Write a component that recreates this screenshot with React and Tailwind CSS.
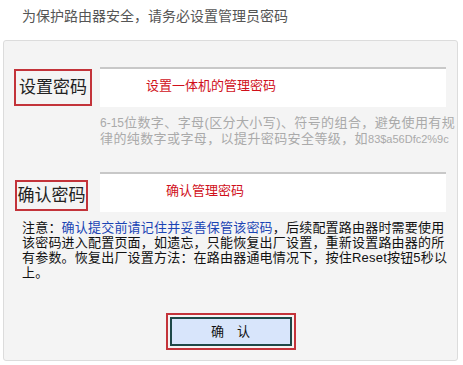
/**
 * Router admin password setup — first-run prompt.
 */
import { useState } from 'react';

const cjk = "font-['Liberation_Sans','Noto_Sans_CJK_SC',sans-serif]";

function PasswordRow({ label, hint, labelClass, alignClass }) {
  const [value, setValue] = useState('');
  return (
    <div className={`flex ${alignClass}`}>
      <div className="w-[86px] shrink-0">
        <div className={`flex items-center justify-center whitespace-nowrap border-2 border-[#c3333a] text-[17px] text-[#222] leading-none ${labelClass}`}>
          {label}
        </div>
      </div>
      <div className="relative w-[346px] h-[40px] bg-white border-t-2 border-[#c8c8c8]">
        <input
          type="password"
          value={value}
          onChange={e => setValue(e.target.value)}
          className="w-full h-full outline-none bg-transparent px-2"
        />
        {!value && (
          <span className="absolute top-[9px] text-[13px] leading-[16px] text-[#d0101b] pointer-events-none" style={{ left: hint.left }}>
            {hint.text}
          </span>
        )}
      </div>
    </div>
  );
}

export default function App() {
  return (
    <div className={`w-[463px] h-[365px] bg-white ${cjk}`}>
      <p className="pl-[22px] pt-[6px] h-[40px] text-[14px] text-[#555]">为保护路由器安全，请务必设置管理员密码</p>

      <div className="mx-[3px] w-[455px] h-[321px] bg-[#f4f4f4] border border-[#dcdcdc] rounded-[3px] pt-[26px] pl-[10px]">
        <PasswordRow
          label="设置密码"
          labelClass="w-[78px] h-[37px]"
          alignClass="items-center"
          hint={{ text: '设置一体机的管理密码', left: 46 }}
        />

        {/* password rules hint */}
        <p className="ml-[86px] mt-[8px] w-[358px] whitespace-nowrap text-[13px] leading-[15px] text-[#aaa] tracking-[0.4px]">
          <span className="text-[12px] tracking-normal">6-15</span>位数字、字母(区分大小写)、符号的组合，避免使用有规
          <br />
          律的纯数字或字母，以提升密码安全等级，如<span className="text-[11px] tracking-normal">83$a56Dfc2%9c</span>
        </p>

        <div className="mt-[25px]">
          <PasswordRow
            label="确认密码"
            labelClass="w-[73px] h-[31px] ml-[1px] mb-[1px]"
            alignClass="items-end"
            hint={{ text: '确认管理密码', left: 66 }}
          />
        </div>

        <p className="mt-[8px] ml-[8px] w-[428px] text-[13px] leading-[15px] text-[#111] tracking-[0.2px]">
          注意：<span className="text-[#1a44b4]">确认提交前请记住并妥善保管该密码</span>，后续配置路由器时需要使用该密码进入配置页面，如遗忘，只能恢复出厂设置，重新设置路由器的所有参数。恢复出厂设置方法：在路由器通电情况下，按住Reset按钮5秒以上。
        </p>

        <div className="flex justify-center mt-[33px] pr-[10px]">
          <div className="border-2 border-[#c3333a] p-[2px]">
            <button className="w-[122px] h-[29px] bg-[#d8e5fb] border-2 border-[#1e4848] text-[13px] text-[#111]">
              确　认
            </button>
          </div>
        </div>
      </div>
    </div>
  );
}
